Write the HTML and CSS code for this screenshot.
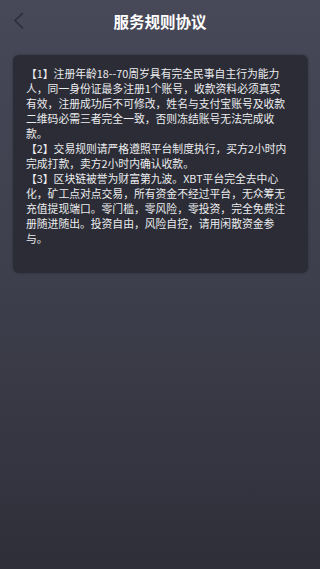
FILE: index.html
```html
<!DOCTYPE html>
<html lang="zh-CN">
<head>
  <meta charset="UTF-8">
  <meta name="viewport" content="width=device-width, initial-scale=1.0">
  <title>服务规则协议</title>
  <link rel="stylesheet" href="styles.css">
</head>
<body>
  <header class="topbar">
    <a class="back" href="#">
      <svg width="12" height="18" viewBox="0 0 12 18"><path d="M10 1 L2 8.5 L10 16.5" fill="none" stroke="#2d2e39" stroke-width="1.6"/></svg>
    </a>
    <h1>服务规则协议</h1>
  </header>

  <div class="card">
    <p>【1】注册年龄18--70周岁具有完全民事自主行为能力人，同一身份证最多注册1个账号，收款资料必须真实有效，注册成功后不可修改，姓名与支付宝账号及收款二维码必需三者完全一致，否则冻结账号无法完成收款。</p>
    <p>【2】交易规则请严格遵照平台制度执行，买方2小时内完成打款，卖方2小时内确认收款。</p>
    <p>【3】区块链被誉为财富第九波。XBT平台完全去中心化，矿工点对点交易，所有资金不经过平台，无众筹无充值提现端口。零门槛，零风险，零投资，完全免费注册随进随出。投资自由，风险自控，请用闲散资金参与。</p>
  </div>
</body>
</html>
```

FILE: styles.css
```css
/* 基础 */
html, body {
  margin: 0;
  padding: 0;
}
body {
  min-height: 100vh;
  background: linear-gradient(180deg, #474858 0%, #3e3f4c 50%, #2f2f3a 100%);
  font-family: "Noto Sans CJK SC", "Noto Sans", sans-serif;
  color: #ececef;
}

/* 顶部栏 */
.topbar {
  height: 44px;
  display: flex;
  align-items: center;
  justify-content: center;
  position: relative;
}
.topbar h1 {
  margin: 0;
  font-size: 15.5px;
  font-weight: bold;
  color: #ffffff;
  margin-top: -3px;
}
.back {
  position: absolute;
  left: 13px;
  top: 12px;
  display: block;
  line-height: 0;
}

/* 协议内容 */
.card {
  margin: 11px 12px 0 13px;
  padding: 11px 20.5px 27px 13px;
  background-color: #2b2c35;
  border-radius: 6px;
  box-shadow: 0 0 3px rgba(0, 0, 0, 0.25);
}
.card p {
  margin: 0;
  font-size: 10.8px;
  line-height: 15px;
}
```
